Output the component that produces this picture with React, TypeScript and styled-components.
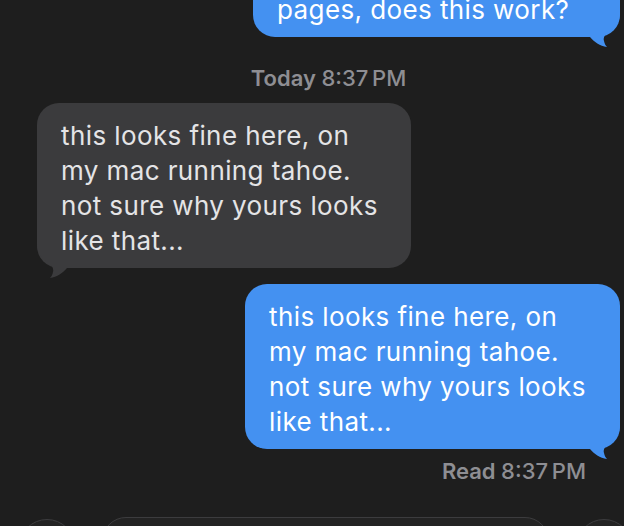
import React from "react";
import styled, { createGlobalStyle } from "styled-components";

const GlobalStyle = createGlobalStyle`
  html, body {
    margin: 0;
    padding: 0;
    height: 526px;
    overflow: hidden;
    background-color: #1e1e1e;
  }
  body {
    font-family: Inter, "Noto Sans", "Liberation Sans", sans-serif;
    -webkit-font-smoothing: antialiased;
  }
`;

function Tail({ side, color }: { side: "left" | "right"; color: string }) {
  return (
    <TailSvg $side={side} width="40" height="42" viewBox="0 0 40 42">
      <path
        d="M0,0 L40,0 L40,6 C40,14 36,21 29,24 C25,27 23,31 24,34 C24.5,36.5 25.5,38.5 27,40 C20,39 14,35 10,30 L0,30 Z"
        fill={color}
      />
    </TailSvg>
  );
}

const reply =
  "this looks fine here, on\nmy mac running tahoe.\nnot sure why yours looks\nlike that...";

function App() {
  return (
    <>
      <GlobalStyle />
      <Thread>
        <Row $align="right">
          <Bubble $kind="sent" $width={367} style={{ marginTop: -23 }}>
            <Text>pages, does this work?</Text>
            <Tail side="right" color="#4491f1" />
          </Bubble>
        </Row>

        <Stamp>
          Today <span>8:37&#8201;PM</span>
        </Stamp>

        <Row $align="left">
          <Bubble $kind="received" $width={374}>
            <Text>{reply}</Text>
            <Tail side="left" color="#3b3b3d" />
          </Bubble>
        </Row>

        <Row $align="right" style={{ marginTop: 16 }}>
          <Bubble $kind="sent" $width={375}>
            <Text>{reply}</Text>
            <Tail side="right" color="#4491f1" />
          </Bubble>
        </Row>

        <Receipt>
          Read <span>8:37&#8201;PM</span>
        </Receipt>

        <InputBar>
          <RoundButton />
          <Field />
          <RoundButton />
        </InputBar>
      </Thread>
    </>
  );
}

const Thread = styled.div`
  display: flex;
  flex-direction: column;
  width: 624px;
  height: 526px;
  overflow: hidden;
  padding: 0 4px 0 37px;
  box-sizing: border-box;
`;

const Row = styled.div<{ $align: "left" | "right" }>`
  display: flex;
  flex: none;
  justify-content: ${(p) => (p.$align === "right" ? "flex-end" : "flex-start")};
`;

const Bubble = styled.div<{ $kind: "sent" | "received"; $width: number }>`
  position: relative;
  box-sizing: border-box;
  width: ${(p) => p.$width}px;
  padding: 15px 20px 10px 24px;
  border-radius: 22px;
  background-color: ${(p) => (p.$kind === "sent" ? "#4491f1" : "#3b3b3d")};
  color: ${(p) => (p.$kind === "sent" ? "#ffffff" : "#e4e4e6")};
  font-size: 26px;
  letter-spacing: 0.4px;
  line-height: 35px;
  white-space: pre-line;
`;

const Text = styled.span`
  position: relative;
  z-index: 1;
  white-space: pre;
`;

const TailSvg = styled.svg<{ $side: "left" | "right" }>`
  position: absolute;
  bottom: -12px;
  ${(p) => (p.$side === "right" ? "right: 0;" : "left: 0; transform: scaleX(-1);")}
`;

const Stamp = styled.div`
  flex: none;
  margin: 28px 0 12px 0;
  text-align: center;
  color: #8e8e93;
  font-size: 22px;
  font-weight: 600;
  line-height: 26px;

  & > span {
    font-weight: 500;
  }
`;

const Receipt = styled.div`
  flex: none;
  margin: 9px 0 0 0;
  padding-right: 34px;
  text-align: right;
  color: #8e8e93;
  font-size: 22px;
  font-weight: 600;
  line-height: 26px;

  & > span {
    font-weight: 500;
  }
`;

const InputBar = styled.div`
  display: flex;
  flex: none;
  align-items: flex-start;
  margin: 33px -4px 0 -37px;
  padding-left: 19px;
  gap: 27px;
`;

const RoundButton = styled.div`
  flex: none;
  width: 56px;
  height: 56px;
  margin-top: 2px;
  border-radius: 50%;
  border: 1.5px solid #3c3c3e;
  background-color: #232323;
  box-sizing: border-box;
`;

const Field = styled.div`
  flex: none;
  width: 447px;
  height: 48px;
  border-radius: 24px;
  border: 1.5px solid #3c3c3e;
  background-color: #232323;
  box-sizing: border-box;
`;

export default App;
